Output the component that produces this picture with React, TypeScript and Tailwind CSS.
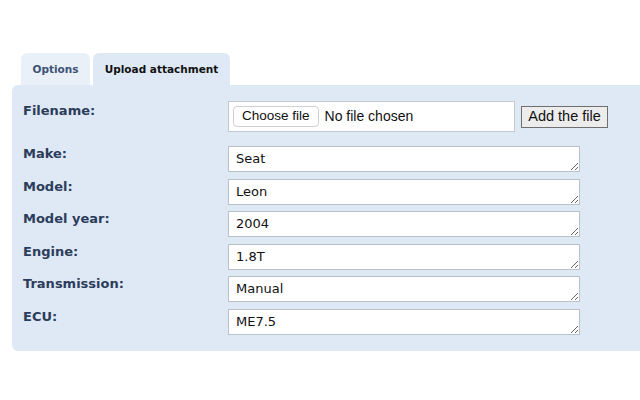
import React from "react";

const fields = [
  { label: "Make:", value: "Seat" },
  { label: "Model:", value: "Leon" },
  { label: "Model year:", value: "2004" },
  { label: "Engine:", value: "1.8T" },
  { label: "Transmission:", value: "Manual" },
  { label: "ECU:", value: "ME7.5" },
];

export default function App() {
  return (
    <div className="w-[640px] h-[400px] bg-white overflow-hidden pt-[53px]"
      style={{ fontFamily: '"DejaVu Sans", Verdana, sans-serif' }}>
      {/* tabs */}
      <div className="flex items-end gap-[3px] pl-[21px] h-[32px]">
        <div className="w-[69px] h-[32px] pt-[1px] rounded-t-[6px] bg-[#eaf0f8] flex items-center justify-center text-[10.5px] font-bold text-[#3d5275]">
          Options
        </div>
        <div className="w-[137px] h-[32px] pt-[1px] rounded-t-[6px] bg-[#dfe9f5] flex items-center justify-center text-[10.5px] font-bold text-[#111]">
          Upload attachment
        </div>
      </div>

      {/* panel */}
      <div className="ml-[12px] w-[700px] bg-[#dfe9f5] rounded-l-[6px] pt-[16px] pb-[16px] pl-[11px] flex flex-col">
        <div className="flex items-start">
          <div className="w-[205px] pt-[1px] text-[13px] leading-[17px] font-bold text-[#2c3d5b]">Filename:</div>
          <div className="w-[287px] h-[31px] bg-white border border-[#c3c9d1] flex items-center pl-[4px] gap-[6px]"
            style={{ fontFamily: '"Liberation Sans", Arial, sans-serif' }}>
            <span className="h-[21px] px-[8px] border border-[#cfcfcf] rounded-[4px] bg-white text-[13.5px] text-[#111] flex items-center">Choose file</span>
            <span className="text-[14px] text-[#111]">No file chosen</span>
          </div>
          <button className="ml-[6px] mt-[5px] w-[87px] h-[22px] border border-[#6f6f6f] bg-[#ececec] text-[14.5px] text-[#111] flex items-center justify-center"
            style={{ fontFamily: '"Liberation Sans", Arial, sans-serif' }}>
            Add the file
          </button>
        </div>

        <div className="flex flex-col gap-[6.6px] mt-[14px]">
          {fields.map((f) => (
            <div key={f.label} className="flex items-start">
              <div className="w-[205px] -mt-[1px] text-[13px] leading-[17px] font-bold text-[#2c3d5b]">{f.label}</div>
              <textarea readOnly defaultValue={f.value}
                className="w-[352px] h-[26px] bg-white border border-[#b9c1cb] px-[7px] pt-[3px] text-[13px] leading-[17px] text-[#111] outline-none overflow-hidden resize" />
            </div>
          ))}
        </div>
      </div>
    </div>
  );
}
